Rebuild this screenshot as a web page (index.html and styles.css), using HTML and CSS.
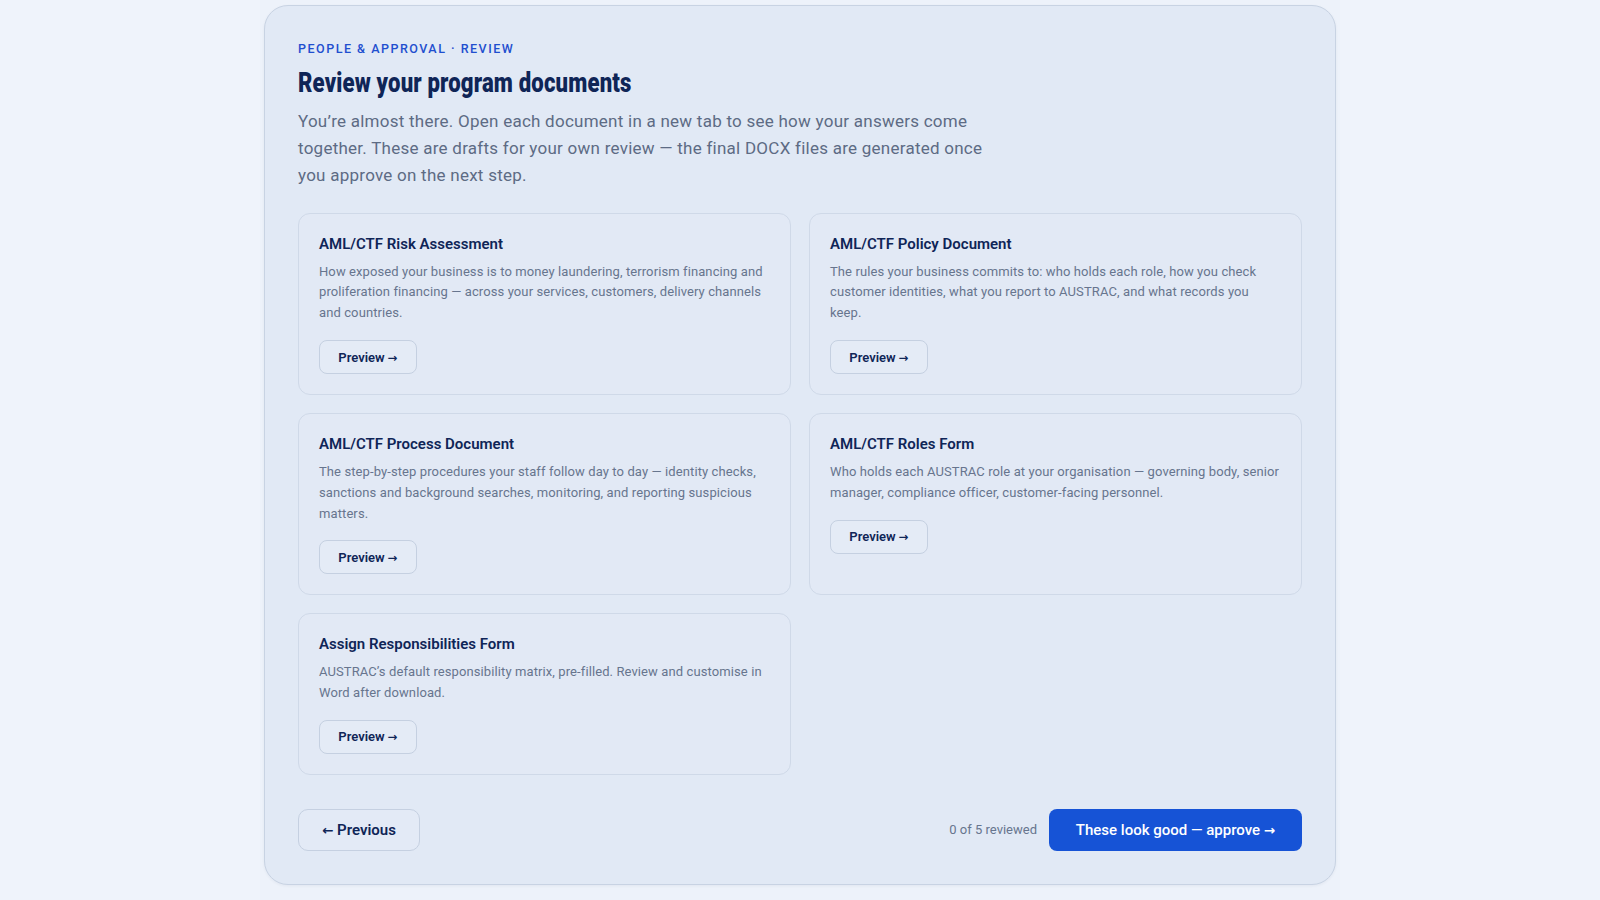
FILE: index.html
```html
<!DOCTYPE html>
<html lang="en">
<head>
<meta charset="utf-8">
<title>Review your program documents</title>
<link rel="stylesheet" href="styles.css">
</head>
<body>
<div class="page">
  <main class="panel">
    <header class="intro">
      <p class="eyebrow">People &amp; Approval · Review</p>
      <h1 class="title"><span class="title-text">Review your program documents</span></h1>
      <p class="lead">You’re almost there. Open each document in a new tab to see how your answers come together. These are drafts for your own review — the final DOCX files are generated once you approve on the next step.</p>
    </header>

    <section class="docs">
      <article class="doc">
        <h2 class="doc-title">AML/CTF Risk Assessment</h2>
        <p class="doc-desc">How exposed your business is to money laundering, terrorism financing and proliferation financing — across your services, customers, delivery channels and countries.</p>
        <button class="btn-preview">Preview <span class="arrow">→</span></button>
      </article>
      <article class="doc">
        <h2 class="doc-title">AML/CTF Policy Document</h2>
        <p class="doc-desc">The rules your business commits to: who holds each role, how you check customer identities, what you report to AUSTRAC, and what records you keep.</p>
        <button class="btn-preview">Preview <span class="arrow">→</span></button>
      </article>
      <article class="doc">
        <h2 class="doc-title">AML/CTF Process Document</h2>
        <p class="doc-desc">The step-by-step procedures your staff follow day to day — identity checks, sanctions and background searches, monitoring, and reporting suspicious matters.</p>
        <button class="btn-preview">Preview <span class="arrow">→</span></button>
      </article>
      <article class="doc">
        <h2 class="doc-title">AML/CTF Roles Form</h2>
        <p class="doc-desc">Who holds each AUSTRAC role at your organisation — governing body, senior manager, compliance officer, customer-facing personnel.</p>
        <button class="btn-preview">Preview <span class="arrow">→</span></button>
      </article>
      <article class="doc">
        <h2 class="doc-title">Assign Responsibilities Form</h2>
        <p class="doc-desc">AUSTRAC’s default responsibility matrix, pre-filled. Review and customise in Word after download.</p>
        <button class="btn-preview">Preview <span class="arrow">→</span></button>
      </article>
    </section>

    <footer class="actions">
      <button class="btn-back"><span class="arrow">←</span> Previous</button>
      <div class="actions-right">
        <span class="progress">0 of 5 reviewed</span>
        <button class="btn-approve">These look good — approve <span class="arrow">→</span></button>
      </div>
    </footer>
  </main>
</div>
</body>
</html>
```

FILE: styles.css
```css
* { box-sizing: border-box; }

html, body {
  margin: 0;
  padding: 0;
  background: #eff3fb;
  font-family: Roboto, "Noto Sans", sans-serif;
  color: #0f2557;
}

.page {
  width: 1080px;
  margin: 0 auto;
  padding-top: 5px;
  background: #edf2fa;
  min-height: 900px;
}

.panel {
  width: 1072px;
  margin: 0 auto;
  background: #e1e9f5;
  border: 1px solid #c8d3e3;
  border-radius: 24px;
  padding: 34px 33px 33px;
  box-shadow: 0 1px 3px rgba(30, 50, 90, 0.06);
}

.intro { margin-bottom: 23px; }

.eyebrow {
  margin: 0 0 7px;
  font-size: 12.5px;
  line-height: 18px;
  font-weight: 500;
  letter-spacing: 1.5px;
  text-transform: uppercase;
  color: #1f4fcf;
}

.title {
  margin: 0 0 7px;
  font-size: 28px;
  line-height: 36px;
  font-weight: 900;
  color: #0f2557;
  white-space: nowrap;
}

.title-text {
  display: inline-block;
  transform: scaleX(0.79);
  transform-origin: left center;
  letter-spacing: 0.2px;
}

.lead {
  margin: 0;
  max-width: 700px;
  font-size: 17px;
  line-height: 27.2px;
  letter-spacing: 0.25px;
  color: #5d6b84;
}

.docs {
  display: grid;
  grid-template-columns: 1fr 1fr;
  gap: 18px;
}

.doc {
  display: flex;
  flex-direction: column;
  align-items: flex-start;
  background: #e2e9f5;
  border: 1px solid #cfd9e8;
  border-radius: 12px;
  padding: 20px 22px 20px 20px;
}

.doc-title {
  margin: 0 0 7px;
  font-size: 15px;
  line-height: 21px;
  font-weight: 600;
  color: #0f2557;
}

.doc-desc {
  margin: 0 0 16px;
  font-size: 13px;
  line-height: 20.8px;
  letter-spacing: 0.1px;
  color: #67758e;
}

.arrow {
  font-family: "DejaVu Sans", sans-serif;
  font-weight: 700;
  font-size: 0.9em;
}

.btn-preview {
  font-family: inherit;
  font-size: 13px;
  font-weight: 600;
  color: #0f2557;
  background: #e4ebf6;
  border: 1px solid #c5d0e1;
  border-radius: 8px;
  width: 98px;
  height: 34px;
  padding: 0;
  cursor: pointer;
}

.actions {
  margin-top: 34px;
  display: flex;
  justify-content: space-between;
  align-items: center;
}

.btn-back {
  font-family: inherit;
  font-size: 15px;
  font-weight: 600;
  color: #0f2557;
  background: #e3eaf6;
  border: 1px solid #c5d0e1;
  border-radius: 10px;
  width: 122px;
  height: 42px;
  padding: 0;
}

.actions-right {
  display: flex;
  align-items: center;
  gap: 12px;
}

.progress {
  font-size: 13px;
  color: #67758e;
}

.btn-approve {
  font-family: inherit;
  font-size: 15px;
  font-weight: 500;
  color: #ffffff;
  background: #1653d6;
  border: none;
  border-radius: 8px;
  width: 253px;
  height: 42px;
  padding: 0;
}
```
